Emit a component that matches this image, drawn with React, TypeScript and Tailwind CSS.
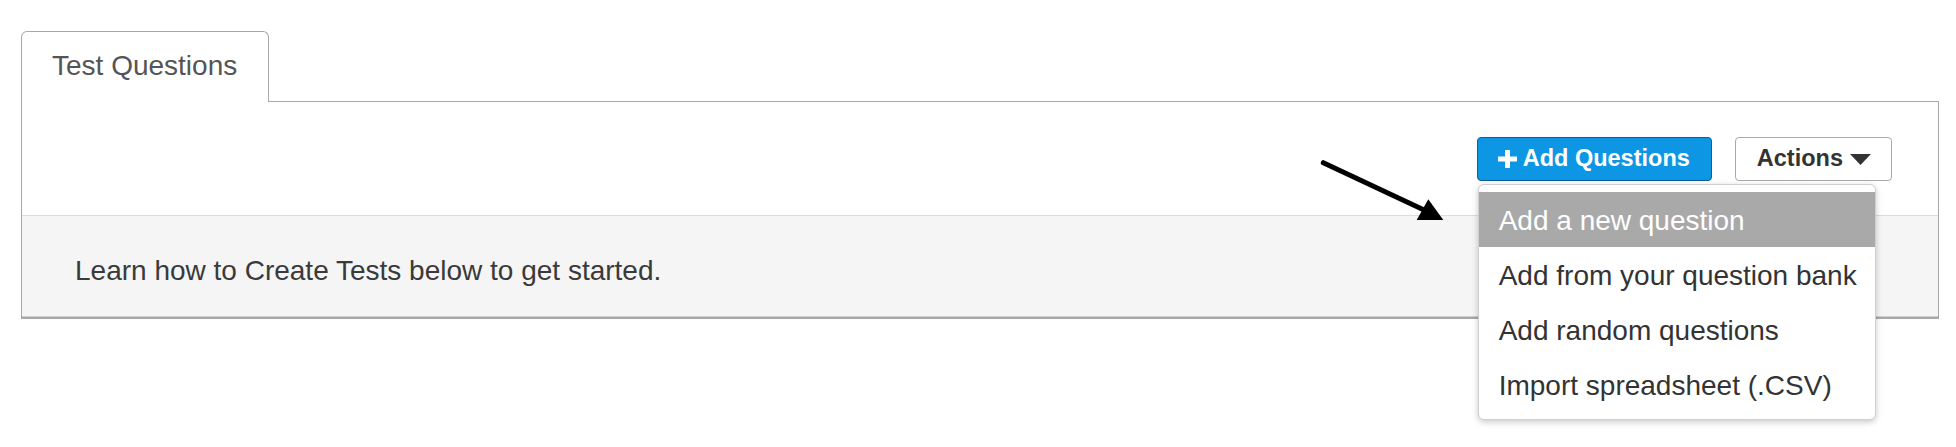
import React from "react";

const items = [
  "Add a new question",
  "Add from your question bank",
  "Add random questions",
  "Import spreadsheet (.CSV)",
];

export default function App() {
  return (
    <div
      className="relative w-full h-[447px] bg-white pl-[21px] pr-[17px] pt-[31px] text-[#333]"
      style={{ fontFamily: '"Liberation Sans", Arial, Helvetica, sans-serif' }}
    >
      {/* Tab */}
      <div className="relative z-10 -mb-px flex h-[71px] w-[248px] items-start rounded-t-[6px] border border-b-0 border-[#a8a8a8] bg-white pl-[30px] pt-[14px]">
        <span className="text-[28px] leading-[40px] text-[#555]">Test Questions</span>
      </div>

      {/* Panel */}
      <div className="w-[1918px] border border-b-2 border-[#a8a8a8] border-b-[#a8a8a8] bg-white">
        <div className="flex h-[113px] items-start justify-end gap-[23px] pr-[46px] pt-[35px]">
          <div className="relative">
            <button className="flex h-[44px] items-center rounded-[4px] border border-[#0b5f96] bg-[#0d96e4] pl-[20px] pr-[21px] text-[23.5px] font-bold text-white">
              <svg width="19" height="18" viewBox="0 0 19 18" className="mr-[6px]">
                <rect x="0" y="6.5" width="19" height="5" fill="white" />
                <rect x="7" y="0" width="5" height="18" fill="white" />
              </svg>
              Add Questions
            </button>
            <div className="absolute left-[1px] top-[47px] z-20 w-[398px] rounded-[6px] border border-[#d0d0d0] bg-white py-[7px] shadow-[0_2px_6px_rgba(0,0,0,0.22)]">
              {items.map((t, i) => (
                <div
                  key={t}
                  className={
                    i === 0
                      ? "h-[55px] bg-[#a9a9a9] pl-[20px] pt-[3px] text-[28px] leading-[52px] text-white whitespace-nowrap"
                      : "h-[55px] pl-[20px] pt-[3px] text-[28px] leading-[52px] text-[#333] whitespace-nowrap"
                  }
                >
                  {t}
                </div>
              ))}
            </div>
          </div>
          <button className="flex h-[44px] items-center rounded-[4px] border border-[#a8a8a8] bg-white pl-[21px] pr-[20px] text-[23.5px] font-bold text-[#333]">
            Actions
            <svg width="21" height="11" viewBox="0 0 21 11" className="ml-[7px]">
              <polygon points="0,0 21,0 10.5,11" fill="#333" />
            </svg>
          </button>
        </div>
        <div className="h-[102px] border-t border-b border-t-[#dcdcdc] border-b-[#cfcfcf] bg-[#f5f5f5] pl-[53px] pt-[35px]">
          <p className="text-[28px] leading-[40px] text-[#3a3a3a]">
            Learn how to Create Tests below to get started.
          </p>
        </div>
      </div>

      {/* Arrow */}
      <svg
        className="absolute left-[1315px] top-[155px] z-30"
        width="135"
        height="70"
        viewBox="0 0 135 70"
      >
        <line x1="8.3" y1="7.7" x2="108" y2="54.5" stroke="#000" strokeWidth="5" strokeLinecap="round" />
        <polygon points="128.3,65 101.7,65 113.3,44.3" fill="#000" />
      </svg>
    </div>
  );
}
